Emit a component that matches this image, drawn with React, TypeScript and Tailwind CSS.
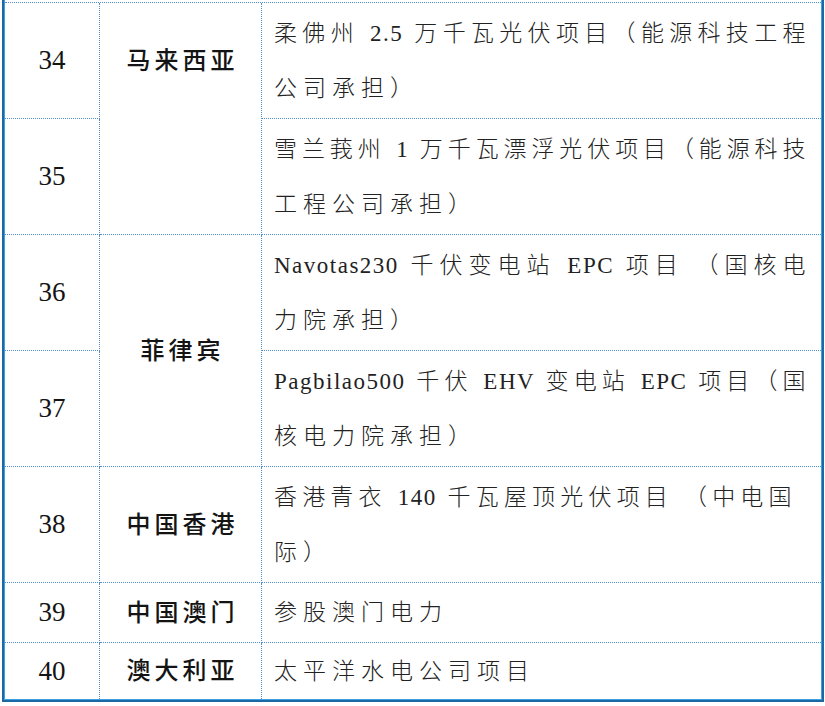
const FONT = "font-['Liberation_Serif','Noto_Sans_CJK_SC',serif]";

type Row = { n: number; country?: string; span?: number; top?: boolean; lines: string[]; loose?: boolean };

const ROWS: Row[] = [
  { n: 34, country: "马来西亚", span: 2, top: true, lines: ["柔佛州 2.5 万千瓦光伏项目（能源科技工程", "公司承担）"] },
  { n: 35, lines: ["雪兰莪州 1 万千瓦漂浮光伏项目（能源科技", "工程公司承担）"] },
  { n: 36, country: "菲律宾", span: 2, lines: ["Navotas230 千伏变电站 EPC 项目 （国核电", "力院承担）"] },
  { n: 37, lines: ["Pagbilao500 千伏 EHV 变电站 EPC 项目（国", "核电力院承担）"] },
  { n: 38, country: "中国香港", span: 1, lines: ["香港青衣 140 千瓦屋顶光伏项目 （中电国", "际）"], loose: true },
  { n: 39, country: "中国澳门", span: 1, lines: ["参股澳门电力"] },
  { n: 40, country: "澳大利亚", span: 1, lines: ["太平洋水电公司项目"] },
];

export default function App() {
  return (
    <div className={`w-[825px] h-[706px] bg-white overflow-hidden pl-[2px] ${FONT}`}>
      <div className="w-[822px] border-l-2 border-r-2 border-b-2 border-[#1c68a6]">
        <div className="border-l border-r border-b border-[#3da2dd] pt-[2px]">
          <div className="grid grid-cols-[95px_162px_1fr] grid-rows-[116px_116px_116px_116px_116px_60px_56px] border-t border-dotted border-[#4f8fcf] text-[#141414]">
            {ROWS.map((r, i) => {
              const last = i === ROWS.length - 1;
              const bottom = last ? "" : "border-b";
              return [
                <div
                  key={`n${r.n}`}
                  className={`flex items-center justify-center border-r border-dotted border-[#4f8fcf] ${bottom} text-[27px] leading-none`}
                >
                  {r.n}
                </div>,
                r.country ? (
                  <div
                    key={`c${r.n}`}
                    className={`flex ${r.top ? "items-start" : "items-center"} justify-center border-r border-dotted border-[#4f8fcf] ${
                      i + (r.span ?? 1) >= ROWS.length ? "" : "border-b"
                    } ${r.span === 2 ? "row-span-2" : ""}`}
                  >
                    <div
                      className={`${r.top ? "h-[116px]" : ""} flex items-center pl-[4px] text-[24px] font-medium tracking-[4px] leading-none`}
                    >
                      {r.country}
                    </div>
                  </div>
                ) : null,
                <div
                  key={`d${r.n}`}
                  className={`flex flex-col justify-center border-dotted border-[#4f8fcf] ${bottom} pl-[12px] ${
                    r.loose ? "pr-[28px]" : "pr-[14px]"
                  } text-[23px] font-light leading-[55px] text-[#222]`}
                >
                  {r.lines.map((l, j) => (
                    <div
                      key={j}
                      className={`whitespace-nowrap ${
                        j === 0 && r.lines.length > 1
                          ? "tracking-[1.5px] text-justify [text-align-last:justify]"
                          : "tracking-[6px]"
                      }`}
                    >
                      {l}
                    </div>
                  ))}
                </div>,
              ];
            })}
          </div>
        </div>
      </div>
    </div>
  );
}
